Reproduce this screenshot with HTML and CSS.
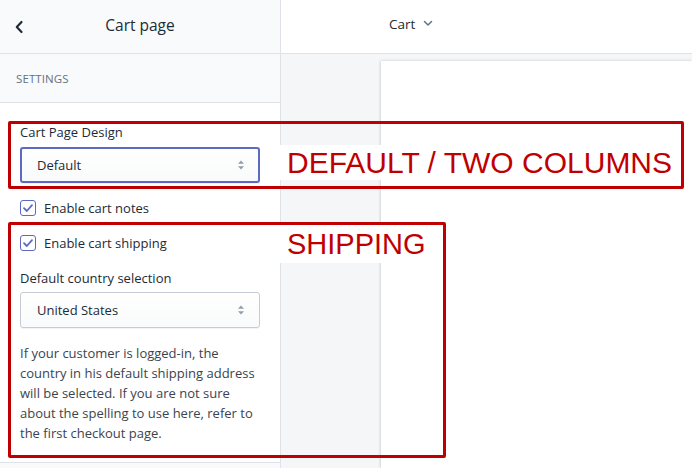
FILE: index.html
```html
<!DOCTYPE html>
<html>
<head>
<meta charset="utf-8">
<link rel="stylesheet" href="styles.css">
</head>
<body>
<div class="app">
  <aside class="sidebar">
    <div class="side-head">
      <svg class="back" width="10" height="14" viewBox="0 0 10 14"><path d="M7.5 2 L2.8 7 L7.5 12" fill="none" stroke="#212b36" stroke-width="2.2" stroke-linecap="round" stroke-linejoin="round"/></svg>
      <span class="side-title">Cart page</span>
    </div>
    <div class="section-head">SETTINGS</div>
    <div class="section-body">
      <div class="label">Cart Page Design</div>
      <div class="select focused">
        <span>Default</span>
        <svg class="arrows" width="8" height="12" viewBox="0 0 8 12"><path d="M4 1.5 L7 4.8 H1 Z M4 10.5 L7 7.2 H1 Z" fill="#919eab"/></svg>
      </div>
      <div class="check-row">
        <span class="checkbox"><svg width="12" height="10" viewBox="0 0 12 10"><path d="M2 5.2 L4.8 8 L10 2.2" fill="none" stroke="#5c6ac4" stroke-width="1.8" stroke-linecap="round" stroke-linejoin="round"/></svg></span>
        <span>Enable cart notes</span>
      </div>
      <div class="check-row">
        <span class="checkbox"><svg width="12" height="10" viewBox="0 0 12 10"><path d="M2 5.2 L4.8 8 L10 2.2" fill="none" stroke="#5c6ac4" stroke-width="1.8" stroke-linecap="round" stroke-linejoin="round"/></svg></span>
        <span>Enable cart shipping</span>
      </div>
      <div class="label spaced">Default country selection</div>
      <div class="select">
        <span>United States</span>
        <svg class="arrows" width="8" height="12" viewBox="0 0 8 12"><path d="M4 1.5 L7 4.8 H1 Z M4 10.5 L7 7.2 H1 Z" fill="#919eab"/></svg>
      </div>
      <p class="help">If your customer is logged-in, the country in his default shipping address will be selected. If you are not sure about the spelling to use here, refer to the first checkout page.</p>
    </div>
  </aside>
  <main class="main">
    <div class="topbar">
      <span class="page-pick">Cart
        <svg width="10" height="7" viewBox="0 0 10 7"><path d="M1.5 1.5 L5 5 L8.5 1.5" fill="none" stroke="#637381" stroke-width="1.5" stroke-linecap="round" stroke-linejoin="round"/></svg>
      </span>
    </div>
    <div class="canvas">
      <div class="preview"></div>
    </div>
  </main>

  <div class="note note-design"><span class="note-text">DEFAULT / TWO COLUMNS</span></div>
  <div class="note note-shipping"><span class="note-text">SHIPPING</span></div>
</div>
</body>
</html>
```

FILE: styles.css
```css
* { box-sizing: border-box; }
html, body { margin: 0; padding: 0; }
body {
  font-family: "Open Sans", "Noto Sans", sans-serif;
  color: #212b36;
  font-size: 13px;
  background: #fff;
}
.app {
  position: relative;
  display: flex;
  width: 692px;
  height: 468px;
  overflow: hidden;
}
.sidebar {
  width: 281px;
  flex: none;
  border-right: 1px solid #dfe3e8;
  background: #f9fafb;
  display: flex;
  flex-direction: column;
}
.side-head {
  height: 54px;
  border-bottom: 1px solid #dfe3e8;
  display: flex;
  align-items: center;
  position: relative;
  padding-left: 14px;
}
.back { flex: none; }
.side-title {
  flex: 1;
  text-align: center;
  font-size: 15.5px;
  margin-right: 24px;
  margin-top: -4px;
}
.section-head {
  height: 49px;
  border-bottom: 1px solid #dfe3e8;
  display: flex;
  align-items: center;
  padding-left: 16px;
  font-size: 11.5px;
  color: #637381;
  letter-spacing: 0.1px;
}
.section-body {
  background: #fff;
  padding: 19px 20px 19px 20px;
  border-bottom: 1px solid #dfe3e8;
}
.label {
  line-height: 20px;
  margin-bottom: 5px;
}
.label.spaced { margin-top: 15px; margin-bottom: 4px; }
.select {
  height: 36px;
  width: 240px;
  border: 1px solid #c4cdd5;
  border-radius: 3px;
  background: linear-gradient(#fff, #f9fafb);
  box-shadow: 0 1px 0 rgba(22,29,37,0.05);
  display: flex;
  align-items: center;
  justify-content: space-between;
  padding: 0 14px 0 16px;
}
.select.focused {
  border: 2px solid #5c6ac4;
  padding: 0 13px 0 15px;
}
.check-row {
  display: flex;
  align-items: center;
  line-height: 20px;
  margin-top: 15px;
  gap: 8px;
}
.checkbox {
  width: 16px;
  height: 16px;
  border: 1px solid #5c6ac4;
  border-radius: 3px;
  display: flex;
  align-items: center;
  justify-content: center;
  background: #fff;
}
.help {
  margin: 15px 0 0 0;
  line-height: 20px;
  color: #3a4450;
}
.main {
  flex: 1;
  display: flex;
  flex-direction: column;
}
.topbar {
  height: 54px;
  background: #fff;
  border-bottom: 1px solid #dfe3e8;
  display: flex;
  align-items: center;
  padding-left: 108px;
}
.page-pick {
  display: flex;
  align-items: center;
  gap: 8px;
  color: #212b36;
  font-size: 13.5px;
  margin-top: -6px;
}
.canvas {
  flex: 1;
  background: #f4f6f8;
  padding: 7px 0 0 100px;
  display: flex;
}
.preview {
  flex: 1;
  background: #fff;
  box-shadow: 0 0 3px rgba(0,0,0,0.15), -1px 0 2px rgba(0,0,0,0.06);
}
.note {
  position: absolute;
  border: 3px solid #c00000;
  border-radius: 2px;
}
.note-design { left: 8px; top: 121px; width: 676px; height: 68px; }
.note-shipping { left: 8px; top: 222px; width: 438px; height: 236px; }
.note-text {
  position: absolute;
  left: 269px;
  background: #fff;
  font-family: "Liberation Sans", Arial, sans-serif;
  color: #c00000;
  font-size: 30px;
  line-height: 35px;
  padding: 0 0 0 7px;
}
.note-design .note-text { top: 21px; }
.note-shipping .note-text { top: 0px; padding-top: 2px; padding-bottom: 1px; font-size: 29px; }
```
